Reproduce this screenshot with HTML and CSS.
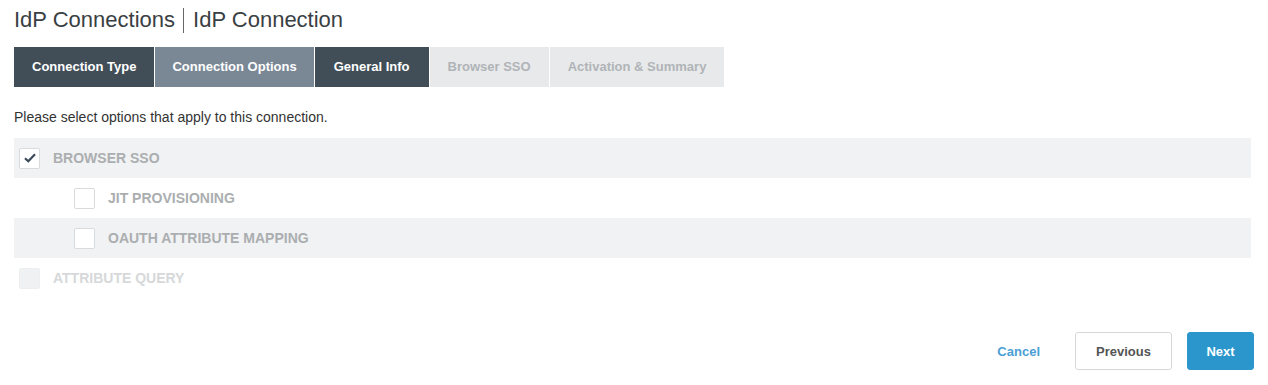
FILE: index.html
```html
<!DOCTYPE html>
<html lang="en">

<head>
  <meta charset="UTF-8">
  <title>IdP Connection</title>
  <link rel="stylesheet" href="styles.css">
</head>

<body>
  <div id="page">
    <h1 class="title">IdP Connections<span class="sep"></span>IdP Connection</h1>
    <div class="tabs">
      <div class="tab done">Connection Type</div>
      <div class="tab current">Connection Options</div>
      <div class="tab done wide">General Info</div>
      <div class="tab todo">Browser SSO</div>
      <div class="tab todo">Activation &amp; Summary</div>
    </div>
    <p class="intro">Please select options that apply to this connection.</p>
    <div class="options">
      <label class="opt shade">
        <span class="box checked">
          <svg width="12" height="10" viewBox="0 0 12 10"><path d="M1 5.2 L4.3 8.2 L11 1.3" fill="none" stroke="#3b4a5a" stroke-width="2.2" /></svg>
        </span>
        <span class="name">Browser SSO</span>
      </label>
      <label class="opt sub">
        <span class="box"></span>
        <span class="name">JIT Provisioning</span>
      </label>
      <label class="opt sub shade">
        <span class="box"></span>
        <span class="name">OAuth Attribute Mapping</span>
      </label>
      <label class="opt off">
        <span class="box"></span>
        <span class="name">Attribute Query</span>
      </label>
    </div>
    <div class="actions">
      <a class="cancel">Cancel</a>
      <button class="btn prev">Previous</button>
      <button class="btn next">Next</button>
    </div>
  </div>
</body>

</html>
```

FILE: styles.css
```css
body {
  margin: 0;
  font-family: "Liberation Sans", Arial, sans-serif;
  color: #333;
  background: #fff;
}

#page {
  padding: 7px 14px 0 14px;
}

.title {
  margin: 0;
  font-size: 22px;
  font-weight: normal;
  line-height: 26px;
  color: #3a3f44;
  display: flex;
  align-items: center;
}

.sep {
  display: inline-block;
  width: 1px;
  height: 25px;
  background: #666;
  margin: 0 9px 0 8px;
}

.tabs {
  display: flex;
  gap: 1px;
  margin-top: 14px;
}

.tab {
  height: 40px;
  line-height: 40px;
  padding: 0 18px;
  font-size: 13px;
  font-weight: bold;
  color: #fff;
}

.tab.done {
  background: #414e58;
}

.tab.wide {
  padding: 0 19px;
}

.tab.current {
  background: #7a8896;
  padding: 0 17px;
}

.tab.todo {
  background: #e8e9ea;
  color: #b0b4b8;
}

.intro {
  margin: 21px 0 12px 0;
  font-size: 14px;
  line-height: 18px;
  color: #333;
}

.options {
  margin-right: 3px;
}

.opt {
  display: flex;
  align-items: center;
  height: 40px;
  padding-left: 5px;
  font-size: 14px;
  font-weight: bold;
  text-transform: uppercase;
  color: #abaeb0;
}

.opt.shade {
  background: #f1f2f3;
}

.opt.sub {
  padding-left: 60px;
}

.box {
  width: 19px;
  height: 19px;
  border: 1px solid #d8dbdd;
  border-radius: 2px;
  background: #fff;
  margin-right: 13px;
  display: flex;
  align-items: center;
  justify-content: center;
}

.opt.off {
  color: #d6d8d9;
}

.opt.off .box {
  background: #f0f1f2;
  border-color: #eceeef;
}

.actions {
  display: flex;
  justify-content: flex-end;
  align-items: center;
  margin-top: 34px;
}

.cancel {
  font-size: 13px;
  font-weight: bold;
  color: #4aa0d5;
  margin-right: 35px;
}

.btn {
  height: 38px;
  font-family: inherit;
  font-size: 13px;
  font-weight: bold;
  border-radius: 3px;
  cursor: pointer;
}

.prev {
  width: 97px;
  background: #fff;
  border: 1px solid #d5d8db;
  color: #555;
  margin-right: 15px;
}

.next {
  width: 67px;
  background: #2b96cc;
  border: 1px solid #2b96cc;
  color: #fff;
}
```
